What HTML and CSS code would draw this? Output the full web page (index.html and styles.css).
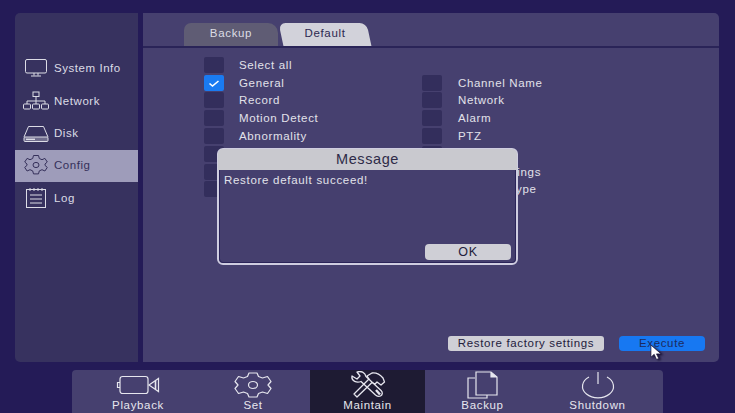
FILE: index.html
```html
<!DOCTYPE html>
<html lang="en">
<head>
<meta charset="utf-8">
<title>Maintain</title>
<link rel="stylesheet" href="styles.css">
</head>
<body>
<div class="top">
  <aside class="sidebar">
    <div class="side-item">
      <svg class="side-icon" viewBox="0 0 26 20" fill="none" stroke="currentColor" stroke-width="1"><rect x="2.5" y="1.5" width="21" height="13.5" rx="1.5"/><path d="M11 15v2.500M15 15v2.500M8 18h10"/></svg>
      <span>System Info</span>
    </div>
    <div class="side-item">
      <svg class="side-icon" viewBox="0 0 26 20" fill="none" stroke="currentColor" stroke-width="1"><rect x="10" y="1" width="6" height="4.500"/><path d="M13 5.500V10M4 13v-3h18v3M13 10v3"/><rect x="0.500" y="13" width="7" height="5" rx="1"/><rect x="9.500" y="13" width="7" height="5" rx="1"/><rect x="18.500" y="13" width="7" height="5" rx="1"/></svg>
      <span>Network</span>
    </div>
    <div class="side-item">
      <svg class="side-icon" viewBox="0 0 26 20" fill="none" stroke="currentColor" stroke-width="1"><path d="M1 14L5.500 3.500h15L25 14"/><rect x="1" y="14" width="24" height="4.500" rx="1" fill="currentColor" fill-opacity=".35"/><path d="M3 16.300h9" stroke-width="1.400"/></svg>
      <span>Disk</span>
    </div>
    <div class="side-item side-active">
      <svg class="side-icon" viewBox="0 0 26 22" fill="none" stroke="currentColor" stroke-width="1" stroke-linejoin="round"><path d="M10.500 1.500h5l.8 3 2.700 1.200 2.900-1.300 2.400 3.600-2.300 2 0 1.400 2.300 2-2.400 3.600-2.900-1.300-2.700 1.200-.8 3h-5l-.8-3-2.700-1.200-2.900 1.300-2.400-3.600 2.300-2 0-1.400-2.300-2 2.400-3.600 2.900 1.300 2.700-1.200z"/><ellipse cx="13" cy="11" rx="3" ry="2.600"/></svg>
      <span>Config</span>
    </div>
    <div class="side-item">
      <svg class="side-icon" viewBox="0 0 26 22" fill="none" stroke="currentColor" stroke-width="1"><rect x="3.500" y="2.500" width="19" height="18"/><path d="M7 1v3M11 1v3M15 1v3M19 1v3M7 8h12M7 12h12M7 16h12"/></svg>
      <span>Log</span>
    </div>
  </aside>
  <main class="panel">
    <div class="tabs">
      <div class="tab tab-back">Backup</div>
      <div class="tab tab-on">Default</div>
    </div>
    <div class="options">
      <div class="col">
        <label class="opt"><i class="box"></i>Select all</label>
        <label class="opt"><i class="box box-on"><svg viewBox="0 0 20 16" fill="none" stroke="#fff" stroke-width="1.600"><path d="M5.500 8.500l3 2.500 6-5"/></svg></i>General</label>
        <label class="opt"><i class="box"></i>Record</label>
        <label class="opt"><i class="box"></i>Motion Detect</label>
        <label class="opt"><i class="box"></i>Abnormality</label>
        <div class="opt"><i class="box"></i></div>
        <div class="opt"><i class="box"></i></div>
        <div class="opt"><i class="box"></i></div>
      </div>
      <div class="col col-right">
        <div class="opt"></div>
        <label class="opt"><i class="box"></i>Channel Name</label>
        <label class="opt"><i class="box"></i>Network</label>
        <label class="opt"><i class="box"></i>Alarm</label>
        <label class="opt"><i class="box"></i>PTZ</label>
        <div class="opt"><i class="box"></i></div>
        <label class="opt"><i class="box"></i>Video Settings</label>
        <label class="opt"><i class="box"></i>Channel Type</label>
      </div>
    </div>
    <div class="actions">
      <button class="btn btn-wide">Restore factory settings</button>
      <button class="btn btn-blue">Execute</button>
    </div>
  </main>
</div>
<nav class="dock">
  <div class="dock-item dock-play">
    <svg class="dock-icon" viewBox="0 0 44 28" fill="none" stroke="currentColor" stroke-width="1.200"><rect x="4" y="5.500" width="28" height="17" rx="2.500"/><path d="M4 11.500H1.500v5H4M33 14l9.500-6.500v13z"/><path d="M39.500 10v8" stroke-width="1.600"/></svg>
    <span>Playback</span>
  </div>
  <div class="dock-item dock-set">
    <svg class="dock-icon" viewBox="0 0 44 28" fill="none" stroke="currentColor" stroke-width="1.200" stroke-linejoin="round"><path d="M18 2h8l1.500 3.500 4 1.500 5-1.500 3.500 5-3 3.500 3 3.500-3.500 5-5-1.500-4 1.500L26 26h-8l-1.500-3.500-4-1.500-5 1.500-3.500-5 3-3.500-3-3.500 3.500-5 5 1.500 4-1.500z"/><ellipse cx="22" cy="14" rx="4.500" ry="3.500"/></svg>
    <span>Set</span>
  </div>
  <div class="dock-item dock-active">
    <svg class="dock-icon" viewBox="0 0 38 28" fill="none" stroke="currentColor" stroke-width="1.300" stroke-linejoin="round"><path d="M3 5l5 3 3-3-3-4c4-1.500 8 .5 9 4.500l15 14c2 2 1.500 4.500-.5 5.500s-3 .5-5-1L12 10.500c-4 1.500-10 0-9-5.500z"/><path d="M8 26l-3-3L20 8l-2-3 5-3c4-.5 8 1.500 11 5l1.500 4-3.500 3-4-3-2 2-3-1.500z"/><path d="M27 19l4 4.500" stroke-width="2.400"/></svg>
    <span>Maintain</span>
  </div>
  <div class="dock-item dock-backup">
    <svg class="dock-icon" viewBox="0 0 44 28" fill="none" stroke="currentColor" stroke-width="1.200"><path d="M14 7H7v20h19v-3"/><path d="M15 1h15l6 5v18H15z"/><path d="M30 1v5h6" fill="currentColor"/></svg>
    <span>Backup</span>
  </div>
  <div class="dock-item dock-power">
    <svg class="dock-icon" viewBox="0 0 44 28" fill="none" stroke="currentColor" stroke-width="1.200"><path d="M13 6a15.500 11.500 0 1 0 18 0"/><path d="M22 1v12"/></svg>
    <span>Shutdown</span>
  </div>
</nav>
<section class="dialog">
  <h2 class="dialog-title">Message</h2>
  <div class="dialog-body">
    <p class="dialog-text">Restore default succeed!</p>
    <button class="btn btn-ok">OK</button>
  </div>
</section>
<svg class="cursor" viewBox="0 0 14 18"><path d="M1 1v13l3.500-3 2.500 5.500 2.500-1L7 10.500h5z" fill="#fff" stroke="#1a1438" stroke-width=".8"/></svg>
</body>
</html>
```

FILE: styles.css
```css
* { box-sizing: border-box; }
html, body { margin: 0; height: 100%; }
body {
  position: relative;
  width: 735px;
  height: 413px;
  overflow: hidden;
  background: #241b57;
  color: #e2e2ea;
  font-family: "Liberation Sans", Arial, sans-serif;
  font-size: 11.5px;
  letter-spacing: .65px;
  padding: 13px 16px 0 15px;
}
.top { display: flex; gap: 5px; height: 349px; }
.sidebar {
  width: 123px;
  background: #37325f;
  border-radius: 5px 0 0 5px;
  padding-top: 40px;
  display: flex;
  flex-direction: column;
}
.side-item {
  height: 32.3px;
  display: flex;
  align-items: center;
  gap: 5px;
  padding: 0 0 1.5px 8px;
  color: #dcdce6;
  letter-spacing: .55px;
}
.side-icon { width: 26px; height: 22px; flex: none; }
.side-active { background: #9e9cba; color: #35305a; }
.panel {
  flex: 1;
  background: #46406f;
  border-radius: 0 5px 5px 0;
  position: relative;
  display: flex;
  flex-direction: column;
}
.tabs {
  height: 35px;
  padding: 10px 0 0 41px;
  display: flex;
  gap: 3px;
  border-bottom: 2px solid #2a2458;
  flex: none;
}
.tab {
  position: relative;
  z-index: 0;
  width: 94px;
  height: 23px;
  line-height: 21px;
  text-align: center;
}
.tab::before {
  content: "";
  position: absolute;
  z-index: -1;
  inset: 0;
  border-radius: 7px 7px 0 0;
  background: #5f5c74;
}
.tab-back { color: #dcdce4; }
.tab-back::before { border-radius: 7px 10px 0 0; }
.tab-on { color: #2c2850; width: 88px; }
.tab-on::before { background: #d2d2da; transform: skewX(12deg); }
.options { display: flex; padding: 8px 0 0 61px; flex: none; }
.col { width: 218px; display: flex; flex-direction: column; }
.opt {
  height: 17.8px;
  display: flex;
  align-items: center;
  gap: 15px;
}
.col-right .opt { gap: 16px; }
.box {
  position: relative;
  width: 20px;
  height: 16px;
  border-radius: 2px;
  background: #332e5c;
  flex: none;
}
.box-on { background: #1a7bf2; }
.box-on svg { display: block; width: 20px; height: 16px; }
.actions {
  margin-top: auto;
  display: flex;
  justify-content: flex-end;
  gap: 15px;
  padding: 0 14px 11px 0;
}
.btn {
  font: inherit;
  letter-spacing: inherit;
  border: 0;
  padding: 0;
  height: 15px;
  line-height: 15px;
  border-radius: 3px;
  color: #23203c;
  background: #cfcfd6;
}
.btn-wide { width: 156px; }
.btn-blue { width: 86px; background: #1778f2; color: #1c2a5e; border-radius: 4px; }
.dock {
  display: flex;
  width: 591px;
  height: 43px;
  margin: 8px 0 0 57px;
  background: #46406f;
  border-radius: 4px 4px 0 0;
}
.dock-item {
  display: flex;
  flex-direction: column;
  align-items: center;
  justify-content: space-between;
  padding: 1px 0 1px;
  line-height: 13px;
  color: #e6e6ee;
}
.dock-play { width: 132px; }
.dock-set { width: 106px; padding-right: 8px; }
.dock-active { width: 115px; background: #1e1b33; }
.dock-backup { width: 115px; }
.dock-power { width: 123px; padding-right: 8px; }
.dock-icon { width: 44px; height: 28px; flex: none; }
.dialog {
  position: absolute;
  left: 217px;
  top: 148px;
  width: 301px;
  height: 117px;
  border: 2px solid #cfcde0;
  border-radius: 6px;
  background: #453f6e;
  display: flex;
  flex-direction: column;
  outline: 1px solid #2a2458;
  outline-offset: -3px;
}
.dialog-title {
  margin: -1px -1px 0;
  height: 21px;
  line-height: 20px;
  background: #c9c9cf;
  border-radius: 5px 5px 0 0;
  color: #2e2b48;
  font-size: 14.5px;
  font-weight: 400;
  letter-spacing: .6px;
  text-align: center;
  position: relative;
}
.dialog-body {
  flex: 1;
  display: flex;
  flex-direction: column;
  padding: 4px 5px 3px 5px;
}
.dialog-text { margin: 0; line-height: 13px; letter-spacing: .7px; }
.btn-ok { width: 86px; height: 16px; align-self: flex-end; margin-top: auto; border-radius: 4px; font-size: 12.5px; }
.cursor {
  position: absolute;
  left: 650px;
  top: 344px;
  width: 13px;
  height: 17px;
  filter: drop-shadow(2px 1px 1px #1a1438);
}
```
